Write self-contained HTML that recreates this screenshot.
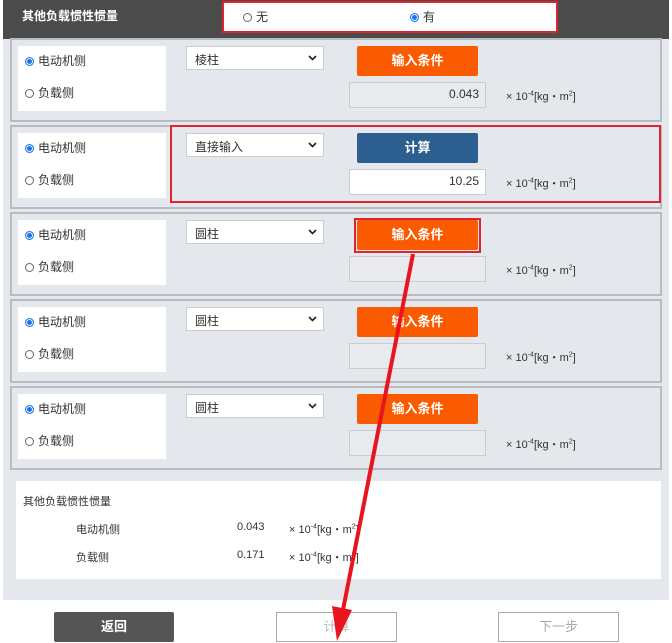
<html><head><style>
body{margin:0;width:672px;height:643px;background:#fff;font-family:"Liberation Sans","Noto Sans CJK SC",sans-serif;position:relative;overflow:hidden;font-size:12px;color:#333}
.a{position:absolute;box-sizing:border-box}
.sec{background:#e4e7ec;border:2px solid #b8bcc2}
.wb{background:#fff}
.rad{display:inline-block;width:9px;height:9px;border:1px solid #666;border-radius:50%;vertical-align:-1px;margin-right:4px;box-sizing:border-box;background:#fff}
.on{border:1px solid #1a73e8;box-shadow:inset 0 0 0 1px #fff;background:#1a73e8}
.sel{background:#fff;border:1px solid #ccc;padding:4px 8px;font-size:12px}
.btn{color:#fff;font-weight:bold;font-size:13px;text-align:center;line-height:30px;border-radius:2px}
.inp{border:1px solid #ccc;background:#e8eaed;text-align:right;padding-right:6px;line-height:23px;font-size:12px}
sup{font-size:7px}
</style></head><body>
<div class="a" style="left:3px;top:0;width:666px;height:39px;background:#4b4b4b"></div>
<div class="a" style="left:22px;top:7px;color:#fff;font-weight:bold;font-size:12px">其他负载惯性惯量</div>
<div class="a" style="left:222px;top:1px;width:336px;height:32px;background:#fff;border:2px solid #e0242f"></div>
<div class="a" style="left:243px;top:8px"><span class="rad"></span>无</div>
<div class="a" style="left:410px;top:8px"><span class="rad on"></span>有</div>
<div class="a" style="left:3px;top:39px;width:666px;height:561px;background:#e4e7ec"></div>

<div id="s"></div>
<script>
var d=[["棱柱","o","0.043",0],["直接输入","b","10.25",1],["圆柱","o","",0],["圆柱","o","",0],["圆柱","o","",0]];
var h="";
d.forEach(function(r,i){var t=38+i*87;
h+='<div class="a sec" style="left:10px;top:'+t+'px;width:652px;height:84px"></div>';
h+='<div class="a wb" style="left:18px;top:'+(t+8)+'px;width:148px;height:65px"></div>';
h+='<div class="a" style="left:25px;top:'+(t+14)+'px"><span class="rad on"></span>电动机侧</div>';
h+='<div class="a" style="left:25px;top:'+(t+46)+'px"><span class="rad"></span>负载侧</div>';
h+='<div class="a sel" style="left:186px;top:'+(t+8)+'px;width:138px;height:24px">'+r[0]+'<svg style="position:absolute;right:6px;top:8px" width="9" height="6"><path d="M1 1L4.5 4.5L8 1" stroke="#222" stroke-width="1.6" fill="none"/></svg></div>';
h+='<div class="a btn" style="left:357px;top:'+(t+8)+'px;width:121px;height:30px;background:'+(r[1]=="o"?"#fa5a00":"#2c5f8f")+'">'+(r[1]=="o"?"输入条件":"计算")+'</div>';
h+='<div class="a inp" style="left:349px;top:'+(t+44)+'px;width:137px;height:26px;'+(r[3]?'background:#fff':'')+'">'+r[2]+'</div>';
h+='<div class="a" style="left:506px;top:'+(t+50)+'px;font-size:11px">× 10<sup>-4</sup>[kg・m<sup>2</sup>]</div>';
});
document.getElementById("s").innerHTML=h;
</script>
<div class="a" style="left:170px;top:125px;width:491px;height:78px;border:2px solid #e0242f"></div>
<div class="a" style="left:354px;top:218px;width:127px;height:35px;border:2px solid #e0242f"></div>

<div class="a wb" style="left:16px;top:481px;width:645px;height:98px"></div>
<div class="a" style="left:23px;top:493px;font-size:11px">其他负载惯性惯量</div>
<div class="a" style="left:76px;top:521px;font-size:11px">电动机侧</div>
<div class="a" style="left:237px;top:521px;font-size:11px">0.043</div>
<div class="a" style="left:289px;top:521px;font-size:11px">× 10<sup>-4</sup>[kg・m<sup>2</sup>]</div>
<div class="a" style="left:76px;top:549px;font-size:11px">负载侧</div>
<div class="a" style="left:237px;top:549px;font-size:11px">0.171</div>
<div class="a" style="left:289px;top:549px;font-size:11px">× 10<sup>-4</sup>[kg・m<sup>2</sup>]</div>

<div class="a btn" style="left:54px;top:612px;width:120px;height:30px;background:#555;line-height:30px">返回</div>
<div class="a" style="left:276px;top:612px;width:121px;height:30px;border:1px solid #aaa;text-align:center;line-height:28px;color:#bbb;font-size:13px">计算</div>
<div class="a" style="left:498px;top:612px;width:121px;height:30px;border:1px solid #aaa;text-align:center;line-height:28px;color:#aaa;font-size:13px">下一步</div>

<svg class="a" style="left:0;top:0" width="672" height="643"><line x1="413" y1="254" x2="342" y2="615" stroke="#e8141e" stroke-width="4"/><polygon points="332,606 352,610 337,641" fill="#e8141e"/></svg>
</body></html>
